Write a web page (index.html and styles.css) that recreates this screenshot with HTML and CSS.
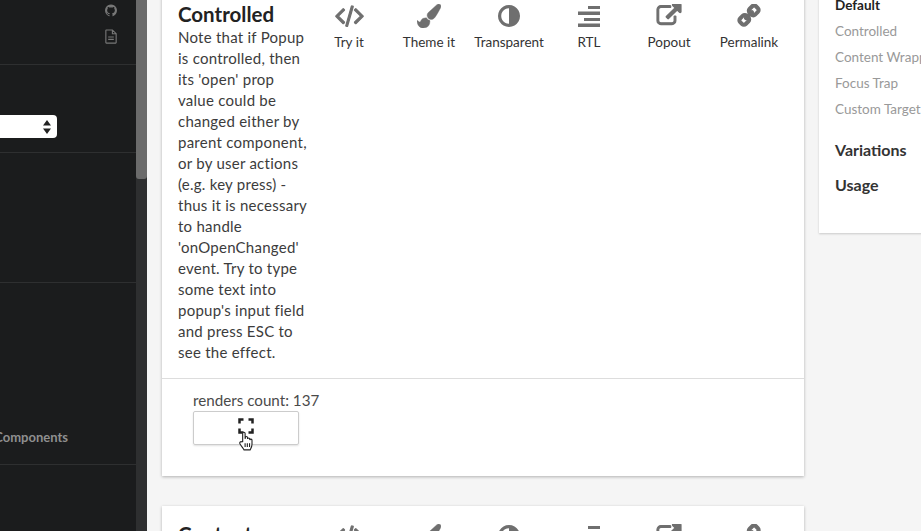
FILE: index.html
```html
<!DOCTYPE html>
<html lang="en">
<head>
  <meta charset="UTF-8" />
  <meta name="viewport" content="width=device-width, initial-scale=1.0"/>
  <title>Popup</title>
  <link rel="stylesheet" href="styles.css">
</head>
<body>

  <svg class="sprite">
    <symbol id="i-code" viewBox="0 150 1920 1600"><path d="M617 1399l-50 50q-10 10-23 10t-23-10l-466-466q-10-10-10-23t10-23l466-466q10-10 23-10t23 10l50 50q10 10 10 23t-10 23l-393 393 393 393q10 10 10 23t-10 23zm591-1067l-373 1291q-4 13-15.500 19.500t-23.500 2.500l-62-17q-13-4-19.500-15.500t-2.500-24.500l373-1291q4-13 15.500-19.500t23.500-2.500l62 17q13 4 19.500 15.500t2.500 24.500zm657 651l-466 466q-10 10-23 10t-23-10l-50-50q-10-10-10-23t10-23l393-393-393-393q-10-10-10-23t10-23l50-50q10-10 23-10t23 10l466 466q10 10 10 23t-10 23z"/></symbol>
    <symbol id="i-brush" viewBox="0 0 1792 1792"><path d="M1615 0q70 0 122.500 46.500t52.500 116.500q0 63-45 151-332 629-465 752-97 91-218 91-126 0-216.500-92.500t-90.500-219.500q0-128 92-212l638-579q59-54 130-54zm-909 1034q39 76 106.500 130t150.500 76l1 71q4 213-129.500 347t-348.500 134q-123 0-218-46.500t-152.500-127.500-86.500-183-29-220q7 5 41 30t62 44.500 59 36.500 46 17q41 0 55-37 25-66 57.500-112.500t69.500-76 88-47.500 103-25.500 125-10.500z"/></symbol>
    <symbol id="i-half" viewBox="128 128 1536 1536"><path d="M896 1440v-1088q-148 0-273 73t-198 198-73 273 73 273 198 198 273 73zm768-544q0 209-103 385.500t-279.500 279.500-385.500 103-385.500-103-279.500-279.500-103-385.500 103-385.500 279.500-279.500 385.500-103 385.500 103 279.500 279.500 103 385.500z"/></symbol>
    <symbol id="i-lines" viewBox="0 0 24 24"><path d="M11 2h12v3H11zM1 7.500h22v3.500H1zM7 14h16v3H7zM1 19.500h22V23H1z"/></symbol>
    <symbol id="i-popout" viewBox="0 0 1792 1792"><path d="M1408 928v320q0 119-84.500 203.500t-203.500 84.500h-832q-119 0-203.500-84.500t-84.500-203.500v-832q0-119 84.500-203.500t203.500-84.500h704q14 0 23 9t9 23v64q0 14-9 23t-23 9h-704q-66 0-113 47t-47 113v832q0 66 47 113t113 47h832q66 0 113-47t47-113v-320q0-14 9-23t23-9h64q14 0 23 9t9 23zm384-864v512q0 26-19 45t-45 19-45-19l-176-176-652 652q-10 10-23 10t-23-10l-114-114q-10-10-10-23t10-23l652-652-176-176q-19-19-19-45t19-45 45-19h512q26 0 45 19t19 45z"/></symbol>
    <symbol id="i-link" viewBox="0 0 1792 1792"><path transform="matrix(-1 0 0 1 1792 0)" d="M1520 1216q0-40-28-68l-208-208q-28-28-68-28-42 0-72 32 3 3 19 18.500t21.500 21.500 15 19 13 25.500 3.500 27.500q0 40-28 68t-68 28q-15 0-27.500-3.500t-25.500-13-19-15-21.500-21.500-18.500-19q-33 31-33 73 0 40 28 68l206 207q27 27 68 27 40 0 68-26l147-146q28-28 28-67zm-703-705q0-40-28-68l-206-207q-28-28-68-28-39 0-68 27l-147 146q-28 28-28 67 0 40 28 68l208 208q27 27 68 27 42 0 72-31-3-3-19-18.500t-21.500-21.500-15-19-13-25.500-3.500-27.500q0-40 28-68t68-28q15 0 27.500 3.500t25.500 13 19 15 21.500 21.500 18.500 19q33-31 33-73zm895 705q0 120-85 203l-147 146q-83 83-203 83-121 0-204-85l-206-207q-83-83-83-203 0-123 88-209l-88-88q-86 88-208 88-120 0-204-84l-208-208q-84-84-84-204t85-203l147-146q83-83 203-83 121 0 204 85l206 207q83 83 83 203 0 123-88 209l88 88q86-88 208-88 120 0 204 84l208 208q84 84 84 204z"/></symbol>
  </svg>

  <aside class="sidebar">
    <div class="side-section side-links">
      <svg class="side-icon" viewBox="0 0 1792 1792"><path d="M896 128q209 0 385.500 103t279.500 279.500 103 385.500q0 251-146.500 451.500t-378.500 277.500q-27 5-40-7t-13-30q0-3 .5-76.500t.5-134.500q0-97-52-142 57-6 102.500-18t94-39 81-66.500 53-105 20.500-150.500q0-119-79-206 37-91-8-204-28-9-81 11t-92 44l-38 24q-93-26-192-26t-192 26q-16-11-42.500-27t-83.500-38.500-85-13.500q-45 113-8 204-79 87-79 206 0 85 20.500 150t52.500 105 80.500 67 94 39 102.500 18q-39 36-49 103-21 10-45 15t-57 5-65.500-21.500-55.500-62.500q-19-32-48.500-52t-49.500-24l-20-3q-21 0-29 4.500t-5 11.500 9 14 13 12l7 5q22 10 43.500 38t31.500 51l10 23q13 38 44 63t67 32 69.500 7 55.500-3.500l23-4q0 38 .5 88.500t.5 54.500q0 18-13 30t-40 7q-232-77-378.500-277.500t-146.500-451.500q0-209 103-385.500t279.500-279.500 385.500-103z"/></svg>
      <svg class="side-icon" viewBox="0 0 14 16"><path class="file-line" d="M2 1h6.500L12.500 5v9.500a.5.5 0 0 1-.5.5H2a.5.5 0 0 1-.5-.5v-13A.5.5 0 0 1 2 1zM8.500 1v4h4M4 8.500h6M4 11h6"/></svg>
    </div>
    <div class="side-section side-theme">
      <div class="select-box">
        <svg class="select-arrows" viewBox="0 0 10 14"><path d="M5 0l4 5.500H1zM5 14l4-5.500H1z"/></svg>
      </div>
    </div>
    <div class="side-section side-empty"></div>
    <div class="side-section side-nav">
      <span class="side-label">Components</span>
    </div>
    <div class="side-section side-last"></div>
  </aside>

  <div class="scrollbar"><div class="scroll-thumb"></div></div>

  <main class="content">
    <div class="examples">
      <section class="card card-first">
        <div class="card-top">
          <div class="card-text">
            <h3>Controlled</h3>
            <p>Note that if Popup is controlled, then its 'open' prop value could be changed either by parent component, or by user actions (e.g. key press) - thus it is necessary to handle 'onOpenChanged' event. Try to type some text into popup's input field and press ESC to see the effect.</p>
          </div>
          <div class="tools">
            <div class="tool"><svg class="tool-icon icon-code"><use href="#i-code"/></svg><span>Try it</span></div>
            <div class="tool"><svg class="tool-icon"><use href="#i-brush"/></svg><span>Theme it</span></div>
            <div class="tool"><svg class="tool-icon icon-half"><use href="#i-half"/></svg><span>Transparent</span></div>
            <div class="tool"><svg class="tool-icon icon-lines"><use href="#i-lines"/></svg><span>RTL</span></div>
            <div class="tool"><svg class="tool-icon icon-popout"><use href="#i-popout"/></svg><span>Popout</span></div>
            <div class="tool"><svg class="tool-icon icon-link"><use href="#i-link"/></svg><span>Permalink</span></div>
          </div>
        </div>
        <div class="card-demo">
          <div class="renders">renders count: 137</div>
          <div class="popup-trigger">
            <svg class="expand-icon" viewBox="0 0 16 16"><path d="M1.500 5.500v-4h4M10.500 1.500h4v4M14.500 10.500v4h-4M5.500 14.500h-4v-4"/></svg>
            <svg class="hand-cursor" viewBox="0 0 14 18"><path d="M4 9.500V2.200a1.100 1.100 0 0 1 2.200 0V7l.2-1a1 1 0 0 1 2 0v1.300a1 1 0 0 1 2 0v.9a1 1 0 0 1 2 .2V12c0 2.500-1.200 4-1.700 5H5.200C4.500 15.500 3 14 1.500 11.500 .8 10.300 2.400 9 3.200 9.800z"/><path class="hand-lines" d="M6.200 11v3.500M8.200 11v3.500M10.200 11v3.500"/></svg>
          </div>
        </div>
      </section>

      <section class="card">
        <div class="card-top">
          <div class="card-text">
            <h3>Content Wrapper</h3>
          </div>
          <div class="tools">
            <div class="tool"><svg class="tool-icon icon-code"><use href="#i-code"/></svg><span>Try it</span></div>
            <div class="tool"><svg class="tool-icon"><use href="#i-brush"/></svg><span>Theme it</span></div>
            <div class="tool"><svg class="tool-icon icon-half"><use href="#i-half"/></svg><span>Transparent</span></div>
            <div class="tool"><svg class="tool-icon icon-lines"><use href="#i-lines"/></svg><span>RTL</span></div>
            <div class="tool"><svg class="tool-icon icon-popout"><use href="#i-popout"/></svg><span>Popout</span></div>
            <div class="tool"><svg class="tool-icon icon-link"><use href="#i-link"/></svg><span>Permalink</span></div>
          </div>
        </div>
      </section>
    </div>

    <nav class="rail">
      <div class="rail-item rail-current">Default</div>
      <div class="rail-item">Controlled</div>
      <div class="rail-item">Content Wrapper</div>
      <div class="rail-item">Focus Trap</div>
      <div class="rail-item">Custom Target</div>
      <div class="rail-head rail-head-first">Variations</div>
      <div class="rail-head">Usage</div>
    </nav>
  </main>

</body>
</html>
```

FILE: styles.css
```css
body {
  margin: 0;
  height: 531px;
  overflow: hidden;
  display: flex;
  background: #f5f5f5;
  font-family: 'Lato', sans-serif;
  color: #333;
}

.sprite {
  display: none;
}

/* left menu */
.sidebar {
  width: 136px;
  flex: none;
  background: #1b1c1d;
  display: flex;
  flex-direction: column;
}

.side-section {
  box-sizing: border-box;
  border-bottom: 1px solid #2e2f30;
}

.side-links {
  height: 65px;
  display: flex;
  flex-direction: column;
  align-items: flex-end;
  gap: 11px;
  padding: 3px 18px 0 0;
}

.side-icon {
  width: 14px;
  height: 15px;
  fill: #777;
}

.file-line {
  fill: none;
  stroke: #777;
  stroke-width: 1.2;
}

.side-theme {
  height: 88px;
  padding-top: 50px;
}

.select-box {
  width: 57px;
  height: 23px;
  background: #fff;
  border-radius: 0 4px 4px 0;
  display: flex;
  justify-content: flex-end;
  align-items: center;
  padding-right: 5px;
  box-sizing: border-box;
}

.select-arrows {
  width: 10px;
  height: 14px;
  fill: #222;
}

.side-empty {
  height: 130px;
}

.side-nav {
  height: 182px;
  display: flex;
  justify-content: flex-end;
  padding: 145px 68px 0 0;
  overflow: hidden;
}

.side-label {
  font-size: 13px;
  font-weight: 700;
  line-height: 18px;
  color: #8f8f8f;
  white-space: nowrap;
}

.side-last {
  flex: 1;
  border-bottom: none;
}

.scrollbar {
  width: 11px;
  flex: none;
  background: #2e2f30;
}

.scroll-thumb {
  height: 179px;
  background: #6b6b6b;
  border-radius: 0 0 3px 3px;
}

/* page content */
.content {
  flex: 1;
  min-width: 0;
  display: flex;
  align-items: flex-start;
  gap: 15px;
  padding-left: 15px;
  margin-top: -14px;
}

.examples {
  width: 642px;
  flex: none;
  display: flex;
  flex-direction: column;
  gap: 30px;
}

.card {
  background: #fff;
  box-shadow: 0 1px 3px rgba(0,0,0,0.28);
}

.card-first {
  height: 490px;
  display: flex;
  flex-direction: column;
}

.card-top {
  display: flex;
  padding: 15px 15px 0 16px;
}

.card-text {
  width: 131px;
  flex: none;
}

.card-text h3 {
  margin: 0;
  font-size: 20.5px;
  font-weight: 700;
  line-height: 26px;
  color: #222;
}

.card-text p {
  margin: 0;
  width: 130px;
  font-size: 15px;
  letter-spacing: 0.25px;
  line-height: 21px;
  color: #3c3c3c;
}

.tools {
  display: grid;
  grid-template-columns: repeat(6, 80px);
}

.tool {
  display: flex;
  flex-direction: column;
  align-items: center;
  gap: 6px;
  padding-top: 3px;
  font-size: 13.5px;
  line-height: 17px;
  color: #333;
  white-space: nowrap;
}

.tool-icon {
  width: 24px;
  height: 24px;
  fill: #6f6f6f;
  stroke: #6f6f6f;
  stroke-width: 30;
}

.tool-icon.icon-code {
  width: 29px;
  stroke-width: 80;
}

.tool-icon.icon-half {
  width: 22px;
  stroke-width: 0;
}

.tool-icon.icon-lines {
  stroke-width: 0;
}

.tool-icon.icon-popout {
  width: 26px;
  stroke-width: 90;
}

.tool-icon.icon-link {
  stroke-width: 110;
}

.card-demo {
  margin-top: 15px;
  border-top: 1px solid #ddd;
  padding: 11px 0 0 31px;
}

.renders {
  font-size: 15.2px;
  line-height: 20px;
  color: #4a4a4a;
}

.popup-trigger {
  position: relative;
  box-sizing: border-box;
  width: 106px;
  height: 34px;
  margin-top: 1px;
  border: 1px solid #ccc;
  border-radius: 2px;
  box-shadow: 0 1px 2px rgba(0,0,0,0.12);
  display: flex;
  justify-content: center;
  padding-top: 6px;
}

.expand-icon {
  width: 16px;
  height: 16px;
  fill: none;
  stroke: #222;
  stroke-width: 2.5;
}

.hand-cursor {
  position: absolute;
  left: 44px;
  top: 19px;
  width: 16px;
  height: 20px;
  fill: #fff;
  stroke: #222;
  stroke-width: 1;
}

.hand-lines {
  fill: none;
}

/* right rail */
.rail {
  width: 200px;
  flex: none;
  height: 247px;
  box-sizing: border-box;
  background: #fff;
  box-shadow: 0 1px 2px rgba(0,0,0,0.18);
  padding: 6px 0 0 16px;
  white-space: nowrap;
}

.rail-item {
  font-size: 13.5px;
  line-height: 26px;
  color: #999;
}

.rail-current {
  font-weight: 700;
  color: #222;
}

.rail-head {
  font-size: 16px;
  font-weight: 700;
  line-height: 20px;
  margin-top: 15px;
  color: #333;
}

.rail-head-first {
  margin-top: 18px;
}
```
